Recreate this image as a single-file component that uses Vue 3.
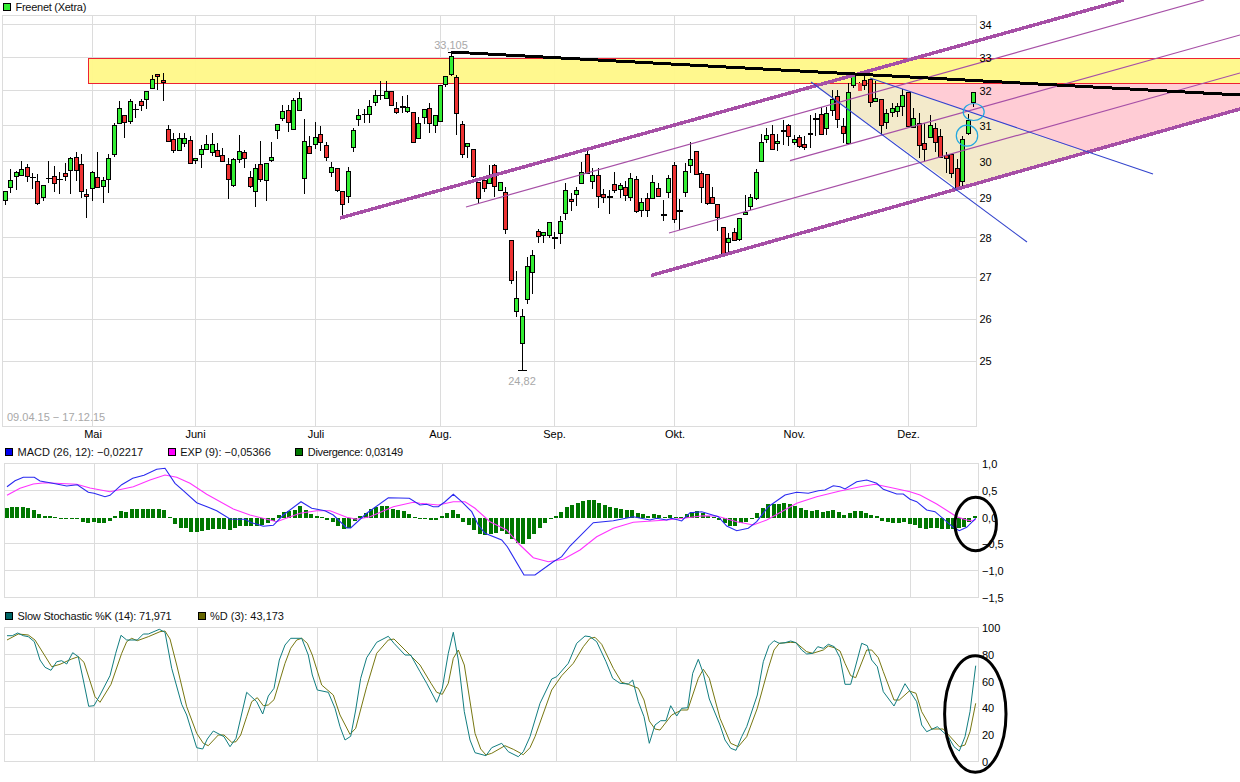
<script setup>
// candles: [high, top, bottom, low, colour] in page pixels, g green, r red, d doji, p red without outline
const raw = [
  [191,191,200,205,'g'],[169,180,187,193,'g'],[171,172,176,190,'g'],[161,169,175,175,'g'],[164,167,176,182,'r'],
  [173,177,177,189,'d'],[174,181,203,205,'r'],[185,185,197,201,'g'],[161,178,178,183,'d'],[166,176,183,192,'r'],
  [172,179,179,194,'d'],[163,173,176,181,'r'],[157,158,170,194,'g'],[152,157,170,181,'r'],[154,164,191,198,'r'],
  [189,194,196,218,'r'],[171,172,188,201,'g'],[152,177,187,188,'r'],[177,180,186,203,'g'],[154,158,179,193,'g'],
  [123,125,154,157,'g'],[101,108,123,124,'g'],[115,115,122,138,'r'],[99,101,121,124,'g'],[104,109,109,118,'d'],
  [99,101,105,111,'r'],[91,91,99,109,'g'],[75,79,88,88,'g'],[74,74,76,90,'r'],[73,80,82,101,'r'],
  [125,129,141,141,'r'],[133,139,150,153,'r'],[133,138,150,150,'g'],[133,138,143,147,'g'],[136,140,163,164,'r'],
  [158,158,160,164,'g'],[145,149,154,168,'g'],[135,144,149,149,'g'],[133,144,152,156,'g'],[143,150,156,156,'r'],
  [148,155,161,161,'r'],[158,164,179,199,'r'],[158,159,185,187,'g'],[135,151,159,163,'g'],[150,152,158,168,'r'],
  [171,177,186,188,'r'],[164,168,191,207,'g'],[141,164,179,182,'r'],[163,163,180,201,'g'],[142,157,160,162,'g'],
  [124,124,130,139,'g'],[105,111,118,121,'g'],[105,110,122,132,'r'],[98,100,129,129,'g'],[92,98,110,110,'g'],
  [119,141,178,194,'g'],[136,146,153,153,'r'],[122,137,144,149,'g'],[126,134,142,151,'r'],[142,145,157,161,'r'],
  [162,167,172,177,'g'],[168,168,190,192,'r'],[191,191,204,219,'r'],[167,171,196,203,'g'],[128,130,147,152,'g'],
  [109,115,119,126,'g'],[109,114,114,123,'d'],[100,106,114,123,'g'],[90,95,102,106,'g'],[81,95,95,100,'d'],
  [81,91,98,98,'g'],[91,91,105,106,'r'],[102,108,112,114,'r'],[96,106,106,113,'d'],[95,107,111,113,'g'],
  [112,112,142,142,'r'],[117,123,138,138,'g'],[109,109,117,124,'g'],[103,108,123,133,'r'],[115,115,125,133,'g'],
  [85,85,121,121,'g'],[76,76,84,87,'g'],[52,56,74,76,'g'],[75,77,113,135,'r'],[121,124,154,158,'r'],
  [143,143,146,158,'g'],[149,149,176,178,'r'],[182,182,198,203,'r'],[180,180,188,192,'r'],[165,177,183,183,'g'],
  [164,165,186,197,'r'],[182,182,190,190,'g'],[187,192,229,234,'r'],[240,240,280,284,'r'],[271,298,311,317,'g'],
  [309,316,343,370,'g'],[257,266,299,304,'g'],[250,255,272,294,'g'],[229,231,236,243,'r'],[232,232,235,243,'g'],
  [222,222,235,238,'g'],[232,237,237,249,'d'],[216,221,233,244,'g'],[183,190,213,220,'g'],[193,199,201,211,'r'],
  [187,190,194,206,'g'],[162,172,183,183,'g'],[150,154,173,173,'r'],[168,175,181,189,'g'],[168,175,196,208,'r'],
  [189,194,197,203,'r'],[190,196,196,214,'d'],[172,184,190,193,'r'],[183,185,189,198,'g'],[181,187,195,201,'r'],
  [173,178,197,201,'g'],[176,179,211,213,'r'],[198,202,210,217,'g'],[193,198,210,217,'r'],[175,182,198,198,'g'],
  [183,188,196,196,'r'],[200,214,214,221,'d'],[175,178,192,198,'g'],[162,165,219,223,'r'],[199,210,210,230,'d'],
  [163,171,192,197,'g'],[142,159,165,173,'g'],[151,151,174,175,'r'],[171,173,187,203,'r'],[174,174,203,205,'r'],
  [187,197,203,203,'r'],[204,204,217,231,'r'],[227,227,253,255,'r'],[233,238,242,253,'g'],[228,232,240,240,'r'],
  [218,218,239,241,'g'],[195,212,214,215,'g'],[194,197,206,210,'g'],[169,172,198,200,'g'],[134,142,161,162,'g'],
  [128,135,139,143,'g'],[125,134,149,150,'r'],[134,141,143,151,'g'],[120,130,130,145,'d'],[124,125,136,146,'r'],
  [135,139,142,145,'g'],[135,137,146,148,'r'],[136,144,147,150,'r'],[115,133,134,148,'r'],[113,118,118,136,'d'],
  [107,114,134,134,'r'],[107,113,128,135,'g'],[90,99,110,116,'g'],[90,96,119,128,'r'],[118,126,133,143,'r'],
  [83,92,143,145,'g'],[76,76,85,88,'g'],[82,82,90,90,'p'],[75,80,85,90,'r'],[79,79,102,107,'r'],
  [81,98,101,101,'g'],[99,99,125,135,'r'],[109,113,122,129,'g'],[103,108,112,117,'g'],[103,106,111,117,'g'],
  [89,95,106,116,'g'],[92,92,126,127,'r'],[108,118,127,127,'g'],[113,123,145,158,'r'],[123,143,149,162,'r'],
  [115,125,137,138,'g'],[123,128,142,152,'r'],[129,136,157,157,'r'],[152,155,158,173,'r'],[154,154,173,178,'r'],
  [159,168,188,189,'r'],[136,139,181,187,'g'],[114,120,133,135,'g'],[92,92,102,107,'g']
]
const candles = raw.map((c, i) => ({
  x: Math.floor(5.3 + 5.44 * i) + 0.5,
  hi: c[0], top: c[1], bot: c[2], lo: c[3], kind: c[4], heavy: i > 70
}))

// bar heights in thirds of a pixel, up is positive
const divergence = [
  29,31,31,31,28,22,10,4,4,1,-4,-4,-3,-3,-12,-17,-14,-17,-17,-11,6,19,18,25,25,25,25,27,26,22,1,-20,-30,-31,-42,-44,-40,-37,
  -35,-35,-35,-38,-32,-25,-24,-26,-24,-22,-17,-10,7,18,20,22,34,24,10,6,1,-7,-14,-26,-34,-31,-10,6,14,25,32,34,34,27,22,19,12,1,
  -1,-4,-8,-8,4,14,24,12,-14,-22,-38,-50,-52,-50,-47,-40,-50,-65,-75,-80,-65,-50,-32,-16,-1,6,16,31,38,44,50,53,53,44,38,32,29,26,23,23,14,11,5,11,8,2,8,2,2,11,17,20,14,5,2,-8,-16,-25,-26,-17,-14,-5,14,29,41,41,41,44,41,35,29,23,
  20,23,17,20,23,17,7,13,19,19,14,9,4,-10,-13,-17,-17,-14,-20,-22,-30,-34,-30,-30,-34,-34,-34,-32,-28,-12,6
]
const bars = divergence.map((v, i) => {
  const h = Math.max(Math.abs(v) / 3, 1)
  return { x: Math.floor(5 + 5.44 * i), y: v > 0 ? 517.5 - h : 517.5, h }
})

// traced in batches, each batch has its own page offset and is in thirds of a pixel
function trace(ox, oy, flat) {
  const out = []
  for (let i = 0; i < flat.length; i += 2) {
    out.push((ox + flat[i] / 3).toFixed(1) + ',' + (oy + flat[i + 1] / 3).toFixed(1))
  }
  return out.join(' ')
}

const macdLine = [
  trace(0, 400, [21,260,45,242,70,232,103,232,120,243,150,248,200,258,232,254,265,277,282,280,315,290,330,286,365,254,398,235,432,226,470,208,495,205,525,250,550,272,590,308,625,322,650,332,690,357,735,358,755,368,790,379,820,376,850,345,903,305,935,325,975,332,1000,345,1040,384,1052,384,1100,340,1165,293,1228,295,1260,315]),
  trace(420, 440, [20,193,40,200,55,200,75,185,100,163,125,185,155,215,175,255,195,280,245,300,262,320,312,405,345,405,400,365,425,350,450,318,520,248,580,242,640,230,690,240,710,235,740,240,755,235,785,243,810,218,845,215,895,230,920,258,950,272,985,265,1010,245,1045,200,1095,165,1130,157,1165,160,1195,152,1215,150,1240,137,1260,140]),
  trace(820, 440, [75,147,110,125,140,120,170,130,190,148,230,162,250,162,270,178,290,185,320,210,345,215,400,262,418,272,440,262,467,235])
].join(' ')
const expLine = [
  trace(0, 400, [21,286,60,265,100,252,135,248,230,253,270,264,330,275,400,260,450,240,495,225,530,232,570,250,620,283,700,327,750,345,830,365,900,340,950,332,990,332,1040,352,1070,358,1110,350,1180,320,1240,307,1260,310]),
  trace(420, 440, [55,195,100,185,135,185,165,205,210,245,260,270,300,315,340,353,385,365,430,358,480,330,530,290,580,265,640,247,740,240,790,235,850,227,890,228,950,245,1000,255,1040,240,1130,190,1190,170,1260,153]),
  trace(820, 440, [75,150,120,140,165,133,215,143,270,155,300,165,350,192,410,230,440,240,460,243,467,237])
].join(' ')
const kLine = [
  trace(0, 605, [21,92,37,92,53,84,70,92,85,95,103,110,120,165,135,187,153,196,170,170,185,167,200,177,218,143,235,155,250,225,266,304,282,302,300,270,330,212,347,145,363,91,380,105,412,105,430,87,445,87,478,73,495,82,515,190,545,298,560,330,590,428,608,432,622,402,640,378,672,395,690,425,708,400,740,262,770,290,788,327,805,273,822,250,838,165,855,120,872,100,905,100,925,150,937,210,952,255,985,262,1005,310,1020,365,1035,405,1052,394,1067,315,1082,220,1100,158,1130,112,1165,94,1182,115,1215,150,1232,150,1260,200]),
  trace(420, 605, [20,235,50,292,67,250,85,145,100,82,115,165,133,320,150,405,165,443,198,452,215,428,245,415,265,440,295,455,310,440,330,395,360,295,395,222,410,215,445,175,470,115,495,93,510,95,530,110,558,170,578,220,600,235,625,237,638,225,655,290,672,335,688,415,705,360,722,347,738,347,752,302,770,333,785,310,803,308,818,205,835,163,850,205,868,282,900,360,915,405,932,430,948,436,965,395,980,365,1012,270,1030,170,1047,122,1062,107,1078,115,1095,113,1112,108,1128,113,1145,135,1160,147,1178,145,1193,125,1210,130,1225,118,1243,125,1260,158]),
  trace(820, 605, [75,238,92,238,125,115,142,122,155,165,172,185,190,260,222,303,255,236,290,290,305,360,320,380,352,365,385,395,402,425,418,438,435,395,450,320,467,182])
].join(' ')
const dLine = [
  trace(0, 605, [21,105,55,87,85,90,105,105,155,185,180,178,215,162,235,155,252,172,285,275,300,292,333,238,365,145,380,110,395,100,412,107,445,95,480,80,495,78,510,102,530,180,560,305,590,385,610,415,625,422,655,390,672,390,695,412,708,410,722,390,740,335,755,290,772,278,790,302,805,300,822,284,855,175,872,130,890,105,905,100,922,115,937,150,965,240,1000,270,1020,330,1050,388,1067,370,1100,245,1130,145,1165,105,1182,102,1215,135,1260,180]),
  trace(420, 605, [33,235,50,262,67,268,85,235,100,160,115,135,133,180,165,385,182,432,198,450,215,445,255,422,280,433,310,449,330,428,345,395,395,255,425,212,460,175,490,125,510,100,525,97,545,118,580,190,605,232,625,238,655,250,672,285,688,348,705,372,720,375,755,330,785,315,803,315,835,220,850,193,868,220,900,340,932,415,955,425,980,395,1012,310,1045,190,1062,135,1078,115,1112,112,1128,113,1160,140,1178,145,1210,135,1225,123,1243,128,1260,138]),
  trace(820, 605, [75,175,92,212,107,218,140,135,155,135,175,158,190,200,222,285,238,285,268,258,288,265,305,320,335,372,370,372,418,425,435,420,450,380,467,295])
].join(' ')

const priceRows = [24.5, 57.5, 90.5, 125.5, 161.5, 198.5, 237.5, 277.5, 319.5, 361.5]
const priceCols = [92.5, 195.5, 315.5, 440.5, 554.5, 674.5, 794.5, 908.5]
const lowerCols = [94.5, 197.5, 317.5, 442.5, 556.5, 676.5, 796.5, 910.5]
const macdRows = [490.5, 543.5, 570.5]
const stochRows = [654.5, 681.5, 707.5, 734.5]

const priceLabels = [['34',24.5],['33',58],['32',91],['31',126],['30',162],['29',198],['28',238],['27',277],['26',319],['25',361]]
const months = [['Mai',93],['Juni',195.5],['Juli',316],['Aug.',440.5],['Sep.',554.5],['Okt.',675],['Nov.',794.5],['Dez.',908.5]]
const macdLabels = [['1,0',464],['0,5',491],['0,0',518],['−0,5',544],['−1,0',571],['−1,5',598]]
const stochLabels = [['100',628],['80',655],['60',682],['40',708],['20',735],['0',762]]
</script>

<template>
  <div class="page">
    <div class="legend first">
      <span class="item tight"><i class="swatch green"></i>Freenet (Xetra)</span>
    </div>

    <svg class="chart price" width="1240" height="431" viewBox="0 13 1240 431">
      <g class="grid">
        <line v-for="y in priceRows" :key="y" x1="2.5" x2="976.5" :y1="y" :y2="y" />
        <line v-for="x in priceCols" :key="x" :x1="x" :x2="x" y1="15.5" y2="426.5" />
        <rect x="2.5" y="15.5" width="974" height="411" fill="none" />
      </g>

      <polygon class="pink" points="870,78 1088,153 1240,109 1240,83 870,83" />
      <polygon class="beige" points="811,82 957,188 1088,153 870,78" />
      <rect class="zone" x="88.5" y="58.5" width="1160" height="24.5" />

      <g v-for="c in candles" :key="c.x" class="candle">
        <line :x1="c.x" :x2="c.x" :y1="c.hi" :y2="c.lo" />
        <line v-if="c.kind === 'd'" class="doji" :class="{ heavy: c.heavy }" :x1="c.x - 3" :x2="c.x + 3" :y1="c.top + 0.5" :y2="c.top + 0.5" />
        <rect v-else :class="c.kind" :x="c.x - 2" :y="c.top + 0.5" width="4" :height="c.bot - c.top" />
      </g>
      <line class="tick" x1="447.5" x2="453.5" y1="52.5" y2="52.5" />
      <line class="tick" x1="518" x2="527" y1="370.5" y2="370.5" />

      <line class="thick" x1="340" y1="218" x2="1124" y2="0" />
      <line class="thick" x1="651" y1="275.5" x2="1240" y2="109" />
      <line class="thin" x1="466" y1="207" x2="1204" y2="0" />
      <line class="thin" x1="790" y1="160.7" x2="1240" y2="35" />
      <line class="thin" x1="669" y1="233" x2="1240" y2="73" />
      <line class="blue" x1="811" y1="82" x2="1027" y2="242" />
      <line class="blue" x1="870" y1="78" x2="1153" y2="174" />
      <line class="black" x1="451" y1="52" x2="1240" y2="95" />
      <ellipse class="cyan" cx="973.7" cy="112" rx="10.5" ry="8.5" />
      <ellipse class="cyan" cx="967" cy="135.7" rx="10.7" ry="10.5" />

      <text class="gray" x="451" y="49" text-anchor="middle">33,105</text>
      <text class="gray" x="522" y="384.5" text-anchor="middle">24,82</text>
      <text class="gray" x="7" y="421">09.04.15 − 17.12.15</text>
      <text v-for="l in priceLabels" :key="l[0]" x="979.5" :y="l[1] + 4">{{ l[0] }}</text>
      <text v-for="m in months" :key="m[0]" :x="m[1]" y="438" text-anchor="middle">{{ m[0] }}</text>
    </svg>

    <div class="legend">
      <span class="item"><i class="swatch blue-box"></i>MACD (26, 12): −0,02217</span>
      <span class="item"><i class="swatch magenta"></i>EXP (9): −0,05366</span>
      <span class="item tighter"><i class="swatch dark-green"></i>Divergence: 0,03149</span>
    </div>

    <svg class="chart" width="1240" height="148" viewBox="0 460 1240 148">
      <g class="grid">
        <line v-for="y in macdRows" :key="y" x1="4.5" x2="978.5" :y1="y" :y2="y" />
        <line v-for="x in lowerCols" :key="x" :x1="x" :x2="x" y1="463.5" y2="597.5" />
        <rect x="4.5" y="463.5" width="974" height="134" fill="none" />
      </g>
      <rect v-for="b in bars" :key="b.x" class="bar" :x="b.x" :y="b.y" width="4" :height="b.h" />
      <polyline class="line exp" :points="expLine" />
      <polyline class="line macd" :points="macdLine" />
      <ellipse class="ring" cx="975.7" cy="524" rx="20.7" ry="26.7" />
      <text v-for="l in macdLabels" :key="l[0]" x="982" :y="l[1] + 4">{{ l[0] }}</text>
    </svg>

    <div class="legend wide">
      <span class="item slight"><i class="swatch teal"></i>Slow Stochastic %K (14): 71,971</span>
      <span class="item"><i class="swatch olive"></i>%D (3): 43,173</span>
    </div>

    <svg class="chart" width="1240" height="158" viewBox="0 624 1240 158">
      <g class="grid">
        <line v-for="y in stochRows" :key="y" x1="4.5" x2="978.5" :y1="y" :y2="y" />
        <line v-for="x in lowerCols" :key="x" :x1="x" :x2="x" y1="627.5" y2="761.5" />
        <rect x="4.5" y="627.5" width="974" height="134" fill="none" />
      </g>
      <polyline class="line d" :points="dLine" />
      <polyline class="line k" :points="kLine" />
      <ellipse class="ring" cx="975.3" cy="714" rx="30.7" ry="58.3" />
      <text v-for="l in stochLabels" :key="l[0]" x="982" :y="l[1] + 4">{{ l[0] }}</text>
    </svg>
  </div>
</template>

<style scoped>
.page {
  width: 1240px;
  height: 782px;
  display: flex;
  flex-direction: column;
  background: #fff;
  font-family: "Liberation Sans", Arial, sans-serif;
  font-size: 11px;
  color: #000;
}

.legend {
  height: 16px;
  flex: none;
  display: flex;
  align-items: center;
  gap: 24.5px;
  padding-left: 5px;
  color: #111;
  white-space: nowrap;
}
.legend.wide {
  gap: 26px;
}
.legend.first {
  height: 13px;
  padding-left: 3px;
  position: relative;
  z-index: 1;
}
.item {
  display: flex;
  align-items: center;
  gap: 4.5px;
}
.tight { letter-spacing: -0.27px; }
.tighter { letter-spacing: -0.34px; }
.slight { letter-spacing: -0.2px; }
.swatch {
  box-sizing: border-box;
  width: 8px;
  height: 8px;
  border: 1px solid #000;
}
.green { background: #33ee33; }
.blue-box { background: #0000ee; }
.magenta { background: #ff00ff; }
.dark-green { background: #007700; }
.teal { background: #006666; }
.olive { background: #666600; }

.chart {
  display: block;
  overflow: visible;
  flex: none;
}
.chart text {
  font-size: 11px;
  fill: #000;
}
.chart text.gray {
  fill: #a8a8a8;
}

.grid line,
.grid rect {
  stroke: #dcdcdc;
  stroke-width: 1;
  shape-rendering: crispEdges;
}

.pink { fill: #ffccd5; }
.beige { fill: #f3eacb; }
.zone {
  fill: #fff888;
  fill-opacity: 0.95;
  stroke: #ee2233;
  stroke-width: 1;
  shape-rendering: crispEdges;
}

.candle line,
.candle rect,
.tick {
  stroke: #000;
  stroke-width: 1;
  shape-rendering: crispEdges;
}
.candle rect.g { fill: #33ee33; }
.candle rect.r { fill: #ee3333; }
.candle rect.p { fill: #f85050; stroke: none; }
.candle line.doji.heavy { stroke-width: 2; }

.thick {
  stroke: #a64fa6;
  stroke-width: 3.5;
  shape-rendering: crispEdges;
}
.thin {
  stroke: #a64fa6;
  stroke-width: 1.2;
}
.blue {
  stroke: #3344cc;
  stroke-width: 1.1;
}
.black {
  stroke: #000;
  stroke-width: 3;
  shape-rendering: crispEdges;
}
.cyan {
  fill: none;
  stroke: #1ea7e0;
  stroke-width: 1.2;
}
.ring {
  fill: none;
  stroke: #000;
  stroke-width: 3;
}

.bar {
  fill: #007700;
  shape-rendering: crispEdges;
}
.line {
  fill: none;
  stroke-width: 1.1;
}
.macd { stroke: #2a2af0; }
.exp { stroke: #ff33ff; }
.k { stroke: #117d80; stroke-width: 1; }
.d { stroke: #777711; stroke-width: 1; }
</style>

<style>
html, body {
  margin: 0;
  overflow: hidden;
  background: #fff;
}
</style>
